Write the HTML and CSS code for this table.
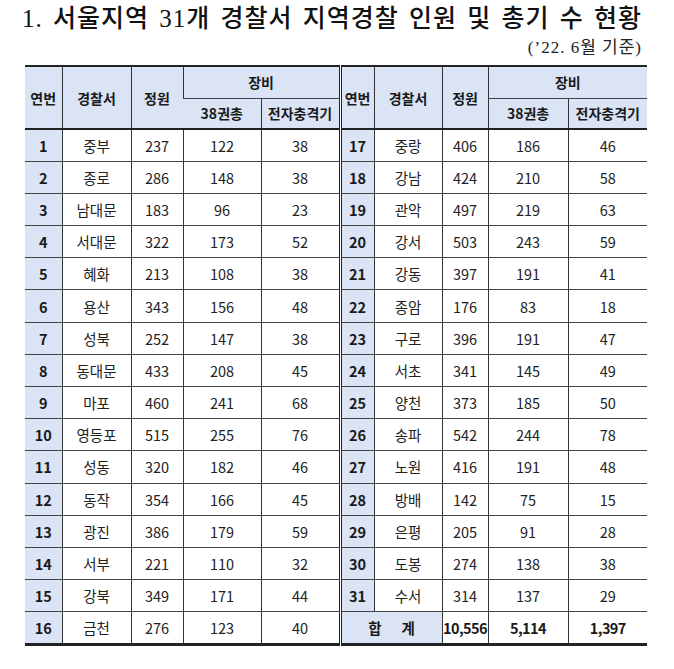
FILE: index.html
```html
<!DOCTYPE html>
<html lang="ko">
<head>
<meta charset="utf-8">
<link rel="stylesheet" href="styles.css">
</head>
<body>
<div class="page">
  <h1 class="title">1. 서울지역 31개 경찰서 지역경찰 인원 및 총기 수 현황</h1>
  <div class="sub">(’22. 6월 기준)</div>
  <table class="tbl">
    <colgroup>
      <col class="c1"><col class="c2"><col class="c3"><col class="c4"><col class="c5">
      <col class="c6"><col class="c7"><col class="c8"><col class="c9"><col class="c10">
    </colgroup>
    <thead>
      <tr class="h1">
        <th rowspan="2">연번</th><th rowspan="2">경찰서</th><th rowspan="2">정원</th><th colspan="2">장비</th>
        <th rowspan="2" class="mid">연번</th><th rowspan="2">경찰서</th><th rowspan="2">정원</th><th colspan="2">장비</th>
      </tr>
      <tr class="h2">
        <th>38권총</th><th>전자충격기</th><th>38권총</th><th>전자충격기</th>
      </tr>
    </thead>
    <tbody>
      <tr><td class="no">1</td><td>중부</td><td>237</td><td>122</td><td>38</td><td class="no mid">17</td><td>중랑</td><td>406</td><td>186</td><td>46</td></tr>
      <tr><td class="no">2</td><td>종로</td><td>286</td><td>148</td><td>38</td><td class="no mid">18</td><td>강남</td><td>424</td><td>210</td><td>58</td></tr>
      <tr><td class="no">3</td><td>남대문</td><td>183</td><td>96</td><td>23</td><td class="no mid">19</td><td>관악</td><td>497</td><td>219</td><td>63</td></tr>
      <tr><td class="no">4</td><td>서대문</td><td>322</td><td>173</td><td>52</td><td class="no mid">20</td><td>강서</td><td>503</td><td>243</td><td>59</td></tr>
      <tr><td class="no">5</td><td>혜화</td><td>213</td><td>108</td><td>38</td><td class="no mid">21</td><td>강동</td><td>397</td><td>191</td><td>41</td></tr>
      <tr><td class="no">6</td><td>용산</td><td>343</td><td>156</td><td>48</td><td class="no mid">22</td><td>종암</td><td>176</td><td>83</td><td>18</td></tr>
      <tr><td class="no">7</td><td>성북</td><td>252</td><td>147</td><td>38</td><td class="no mid">23</td><td>구로</td><td>396</td><td>191</td><td>47</td></tr>
      <tr><td class="no">8</td><td>동대문</td><td>433</td><td>208</td><td>45</td><td class="no mid">24</td><td>서초</td><td>341</td><td>145</td><td>49</td></tr>
      <tr><td class="no">9</td><td>마포</td><td>460</td><td>241</td><td>68</td><td class="no mid">25</td><td>양천</td><td>373</td><td>185</td><td>50</td></tr>
      <tr><td class="no">10</td><td>영등포</td><td>515</td><td>255</td><td>76</td><td class="no mid">26</td><td>송파</td><td>542</td><td>244</td><td>78</td></tr>
      <tr><td class="no">11</td><td>성동</td><td>320</td><td>182</td><td>46</td><td class="no mid">27</td><td>노원</td><td>416</td><td>191</td><td>48</td></tr>
      <tr><td class="no">12</td><td>동작</td><td>354</td><td>166</td><td>45</td><td class="no mid">28</td><td>방배</td><td>142</td><td>75</td><td>15</td></tr>
      <tr><td class="no">13</td><td>광진</td><td>386</td><td>179</td><td>59</td><td class="no mid">29</td><td>은평</td><td>205</td><td>91</td><td>28</td></tr>
      <tr><td class="no">14</td><td>서부</td><td>221</td><td>110</td><td>32</td><td class="no mid">30</td><td>도봉</td><td>274</td><td>138</td><td>38</td></tr>
      <tr><td class="no">15</td><td>강북</td><td>349</td><td>171</td><td>44</td><td class="no mid">31</td><td>수서</td><td>314</td><td>137</td><td>29</td></tr>
      <tr><td class="no">16</td><td>금천</td><td>276</td><td>123</td><td>40</td><td colspan="2" class="no mid sum">합 계</td><td class="b">10,556</td><td class="b">5,114</td><td class="b">1,397</td></tr>
    </tbody>
  </table>
</div>
</body>
</html>
```

FILE: styles.css
```css
html, body {
  margin: 0;
  padding: 0;
  background: #ffffff;
}
body {
  font-family: "Noto Sans CJK KR", "Noto Sans", sans-serif;
  color: #1a1a1a;
}
.page {
  width: 674px;
  padding: 0 0 0 25px;
  box-sizing: border-box;
}
.title {
  margin: 0 0 0 -3px;
  padding-top: 4px;
  height: 30px;
  font-family: "Liberation Serif", "Noto Sans CJK KR", serif;
  font-weight: 500;
  font-size: 25px;
  line-height: 30px;
  letter-spacing: 1px;
  word-spacing: 3px;
  color: #111;
  white-space: nowrap;
}
.sub {
  width: 617px;
  text-align: right;
  font-family: "Liberation Serif", "Noto Sans CJK KR", serif;
  font-size: 17px;
  line-height: 22px;
  height: 22px;
  margin-top: 3px;
  letter-spacing: 1px;
  color: #222;
}
.tbl {
  margin-top: 6px;
  width: 622px;
  table-layout: fixed;
  border-collapse: collapse;
  border-top: 2px solid #222;
  border-bottom: 3px solid #222;
  font-size: 14.5px;
}
.c1 { width: 37px; }
.c2 { width: 69px; }
.c3 { width: 52px; }
.c4 { width: 78px; }
.c5 { width: 79px; }
.c6 { width: 34px; }
.c7 { width: 68px; }
.c8 { width: 46px; }
.c9 { width: 80px; }
.c10 { width: 79px; }
.tbl th, .tbl td {
  padding: 0;
  text-align: center;
  vertical-align: middle;
  border-left: 1px solid #333;
  border-bottom: 1px solid #444;
  white-space: nowrap;
  overflow: hidden;
}
.tbl tr > :first-child { border-left: none; }
.tbl th {
  background: #dbe4f5;
  font-weight: 700;
  font-size: 14px;
  color: #1a1a1a;
}
.h1 { height: 32px; }
.h2 { height: 31px; }
.h2 th, .h1 th[rowspan] { border-bottom: 2px solid #222; }
.tbl tbody tr { height: 32.2px; }
.tbl td { color: #222; }
.tbl .no {
  background: #dbe4f5;
  font-weight: 700;
  color: #1a1a1a;
}
.tbl .mid { border-left: 3px double #222; }
.tbl .sum { letter-spacing: 8px; padding-left: 8px; }
.tbl .b { font-weight: 700; color: #1a1a1a; letter-spacing: -0.6px; }
.tbl tbody tr:last-child td { border-bottom: none; }
```
